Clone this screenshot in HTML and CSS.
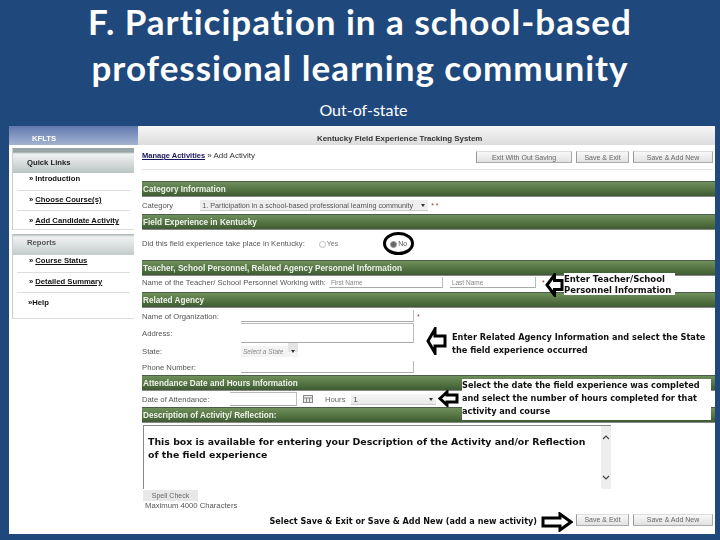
FILE: index.html
```html
<!DOCTYPE html>
<html lang="en">
<head>
    <meta charset="UTF-8">
    <title>F. Participation in a school-based professional learning community</title>
    <link rel="stylesheet" href="styles.css">
</head>
<body>
    <div class="slide">
        <h1><span class="line-one">F. Participation in a school-based</span><span class="line-two">professional learning community</span></h1>
        <div class="subtitle">Out-of-state</div>

        <div class="shot">
            <div class="shot-top">
                <div class="brand">KFLTS</div>
                <div class="system-name">Kentucky Field Experience Tracking System</div>
            </div>
            <div class="shot-body">
                <div class="sidebar">
                    <div class="side-box">
                        <div class="side-head">Quick Links</div>
                        <div class="side-link first">»<u class="plain">Introduction</u></div>
                        <div class="side-link">»<u>Choose Course(s)</u></div>
                        <div class="side-link end">»<u>Add Candidate Activity</u></div>
                    </div>
                    <div class="side-box">
                        <div class="side-head grey">Reports</div>
                        <div class="side-link first">»<u>Course Status</u></div>
                        <div class="side-link">»<u>Detailed Summary</u></div>
                        <div class="side-link last">»Help</div>
                    </div>
                </div>

                <div class="main">
                    <div class="toolbar">
                        <div class="crumbs"><u>Manage Activities</u> » Add Activity</div>
                        <div class="buttons">
                            <button class="btn wide">Exit With Out Saving</button>
                            <button class="btn">Save &amp; Exit</button>
                            <button class="btn mid">Save &amp; Add New</button>
                        </div>
                    </div>

                    <div class="bar">Category Information</div>
                    <div class="row row-cat">
                        <span class="label">Category</span>
                        <span class="select cat-select">1. Participation in a school-based professional learning community<i class="caret"></i></span>
                        <span class="req">* *</span>
                    </div>
                    <div class="bar">Field Experience in Kentucky</div>
                    <div class="row row-ky">
                        <span class="label">Did this field experience take place in Kentucky:</span>
                        <span class="radio">Yes</span>
                        <span class="radio on">No</span>
                    </div>
                    <div class="bar">Teacher, School Personnel, Related Agency Personnel Information</div>
                    <div class="row row-name">
                        <span class="label">Name of the Teacher/ School Personnel Working with:</span>
                        <span class="input first-name">First Name</span>
                        <span class="input last-name">Last Name</span>
                        <span class="req">*</span>
                    </div>
                    <div class="bar">Related Agency</div>
                    <div class="row row-agency">
                        <span class="label">Name of Organization:</span>
                        <span class="input agency">&nbsp;</span>
                        <span class="req">*</span>
                    </div>
                    <div class="row row-address">
                        <span class="label">Address:</span>
                        <span class="input agency tall">&nbsp;</span>
                    </div>
                    <div class="row row-state">
                        <span class="label">State:</span>
                        <span class="select state-select">Select a State<i class="caret boxed"></i></span>
                    </div>
                    <div class="row row-phone">
                        <span class="label">Phone Number:</span>
                        <span class="input agency">&nbsp;</span>
                    </div>
                    <div class="bar">Attendance Date and Hours Information</div>
                    <div class="row row-date">
                        <span class="label">Date of Attendance:</span>
                        <span class="input date">&nbsp;</span>
                        <svg class="cal" width="10" height="8" viewBox="0 0 10 8"><rect x="0.5" y="0.5" width="9" height="7" fill="#eee" stroke="#888"/><path d="M0 3h10M3.500 3v5M6.500 3v5" stroke="#888"/></svg>
                        <span class="label hours">Hours</span>
                        <span class="select hours-select">1<i class="caret"></i></span>
                        <span class="req">*</span>
                    </div>
                    <div class="bar">Description of Activity/ Reflection:</div>
                    <div class="desc">
                        <div class="desc-text">This box is available for entering your Description of the Activity and/or Reflection<br>of the field experience</div>
                        <div class="scroll">
                            <svg width="8" height="5" viewBox="0 0 8 5"><path d="M1 4 4 1l3 3" fill="none" stroke="#444" stroke-width="1.200"/></svg>
                            <svg width="8" height="5" viewBox="0 0 8 5"><path d="M1 1l3 3 3-3" fill="none" stroke="#444" stroke-width="1.200"/></svg>
                        </div>
                    </div>
                    <button class="btn spell">Spell Check</button>
                    <div class="max-chars">Maximum 4000 Characters</div>
                    <div class="bottom">
                        <div class="select-note">Select Save &amp; Exit or Save &amp; Add New (add a new activity)</div>
                        <div class="buttons">
                            <button class="btn">Save &amp; Exit</button>
                            <button class="btn mid">Save &amp; Add New</button>
                        </div>
                    </div>
                </div>
            </div>

            <!-- annotations drawn over the screenshot -->
            <div class="ring"></div>
            <svg class="arrow a1" width="19" height="24" viewBox="0 0 19 24"><path d="M2 12 9.500 2v5.500h7.500v9H9.500V22z" fill="#fff" stroke="#000" stroke-width="3"/></svg>
            <svg class="arrow a2" width="21" height="28" viewBox="0 0 21 28"><path d="M2 14 9 2v7h10v10H9v7z" fill="#fff" stroke="#000" stroke-width="3"/></svg>
            <svg class="arrow a3" width="21" height="17" viewBox="0 0 21 17"><path d="M2 8.500 9 2v3h10v7H9v3z" fill="#fff" stroke="#000" stroke-width="3"/></svg>
            <svg class="arrow a4" width="32" height="20" viewBox="0 0 32 20"><path d="M30 10 19 2v4H2v8h17v4z" fill="#fff" stroke="#000" stroke-width="3"/></svg>
            <div class="note n1">Enter Teacher/School<br>Personnel Information</div>
            <div class="note n2">Enter Related Agency Information and select the State<br>the field experience occurred</div>
            <div class="note n3">Select the date the field experience was completed<br>and select the number of hours completed for that<br>activity and course</div>
        </div>
    </div>
</body>
</html>
```

FILE: styles.css
```css
body {
    margin: 0;
    font-family: "Liberation Sans", sans-serif;
    background-color: #1f497d;
}

.slide {
    width: 720px;
    height: 540px;
    overflow: hidden;
    display: flex;
    flex-direction: column;
    align-items: center;
    background-color: #1f497d;
    color: white;
}

h1 {
    margin: 0;
    font-family: Lato, sans-serif;
    font-size: 35px;
    font-weight: 700;
    letter-spacing: 1px;
    text-align: center;
    white-space: nowrap;
}

.line-one {
    display: block;
    line-height: 42px;
}

.line-two {
    display: block;
    line-height: 51px;
}

.subtitle {
    margin: 6px 0 0 7px;
    height: 27px;
    font-family: Lato, sans-serif;
    font-size: 16px;
    line-height: 22px;
    text-align: center;
}

.shot {
    position: relative;
    width: 706px;
    height: 408px;
    margin-left: 4px;
    background-color: white;
    color: #333;
    font-size: 7.700px;
    filter: blur(0.35px);
}

.shot-top {
    display: flex;
    height: 19px;
    background: linear-gradient(#f6f6f6, #dcdcdc);
}

.brand {
    width: 129px;
    padding-left: 23px;
    box-sizing: border-box;
    background: linear-gradient(#5f78ad, #a4b3d2);
    color: white;
    font-weight: bold;
    line-height: 26px;
}

.system-name {
    flex: 1;
    padding-left: 179px;
    font-size: 7.900px;
    font-weight: bold;
    line-height: 26px;
}

.shot-body {
    display: flex;
}

.sidebar {
    width: 132px;
    padding: 3px 0 0 3px;
    box-sizing: border-box;
}

.side-box {
    width: 122px;
    margin-bottom: 4px;
    border-left: 1px solid #ccc;
    border-bottom: 1px solid #ddd;
    box-sizing: border-box;
}

.side-head {
    height: 25px;
    padding: 5px 0 0 14px;
    box-sizing: border-box;
    background: linear-gradient(#98a5a7, #98a5a7 16%, #f0f2f2 24%, #bcc4c4);
    color: #222;
    font-weight: bold;
    line-height: 20px;
}

.side-head.grey {
    height: 21px;
    padding-top: 0;
    background: linear-gradient(#a8b2b3, #f0f2f2 15%, #c3cbcb);
    color: #555;
    line-height: 18px;
}

.side-link {
    height: 20px;
    margin: 0 4px;
    padding-left: 12px;
    border-bottom: 1px solid #ddd;
    box-sizing: border-box;
    color: #111;
    font-weight: bold;
    line-height: 18px;
}

.side-link u {
    margin-left: 2px;
}

.side-link u.plain {
    text-decoration: none;
}

.side-link.first {
    height: 18px;
    line-height: 12px;
}

.side-link.end {
    height: 18px;
    border-bottom: none;
    line-height: 19px;
}

.side-link.last {
    height: 25px;
    padding-left: 11px;
    border-bottom: none;
    line-height: 19px;
}

.main {
    width: 574px;
    padding-left: 1px;
    box-sizing: border-box;
}

.toolbar {
    display: flex;
    justify-content: space-between;
    height: 24px;
    margin-right: 2px;
    margin-bottom: 11px;
    border-bottom: 1px solid #e4e4e4;
}

.crumbs {
    padding-top: 6px;
    font-size: 8px;
}

.crumbs u {
    color: #14145a;
    font-size: 7.500px;
    font-weight: bold;
}

.buttons {
    display: flex;
    gap: 4px;
    padding-top: 6px;
}

.btn {
    width: 53px;
    height: 12px;
    padding: 0;
    border: 1px solid #aaa;
    border-top-color: #ddd;
    border-left-color: #999;
    background: linear-gradient(#f8f8f8, #e2e2e2);
    color: #666;
    font-family: "Liberation Sans", sans-serif;
    font-size: 7px;
}

.btn.wide {
    width: 96px;
}

.btn.mid {
    width: 80px;
}

.bar {
    height: 16px;
    padding-left: 1px;
    background: linear-gradient(#6f8f5c, #4c6c3c 70%, #3e5a34);
    border-top: 1px solid #4e5d4a;
    border-bottom: 1px solid #888;
    box-sizing: border-box;
    color: #eef2ea;
    font-size: 8.200px;
    font-weight: bold;
    line-height: 16px;
    white-space: nowrap;
}

.row {
    display: flex;
    align-items: center;
    height: 16px;
    box-sizing: border-box;
    color: #555;
}

.label {
    flex: none;
}

.req {
    margin-left: 3px;
    color: #a33;
    font-size: 7px;
}

.select, .input {
    display: inline-block;
    flex: none;
    height: 11px;
    box-sizing: border-box;
    color: #888;
    font-size: 6.500px;
    line-height: 11px;
    white-space: nowrap;
}

.select {
    position: relative;
    background-color: #eee;
    border-bottom: 1px solid #ccc;
}

.caret {
    position: absolute;
    right: 3px;
    top: 4px;
    border-left: 2.500px solid transparent;
    border-right: 2.500px solid transparent;
    border-top: 3px solid #333;
}

.input {
    padding-left: 2px;
    border-bottom: 1px solid #aaa;
    border-right: 1px solid #bbb;
}

.row-cat {
    height: 17px;
}

.cat-select {
    width: 228px;
    margin-left: 27px;
    padding-left: 2px;
    color: #555;
    font-size: 7.200px;
}

.row-ky {
    height: 30px;
    padding-bottom: 3px;
}

.radio {
    position: relative;
    margin-left: 13px;
    padding-left: 9px;
    color: #777;
    font-size: 7px;
}

.radio::before {
    content: "";
    position: absolute;
    left: 1px;
    top: 1px;
    width: 5px;
    height: 5px;
    border: 1px solid #bbb;
    border-radius: 50%;
}

.radio.on {
    margin-left: 51px;
    color: #555;
}

.radio.on::before {
    background-color: #666;
    border-color: #999;
}

.row-name {
    padding-bottom: 3px;
}

.first-name {
    width: 114px;
    margin-left: 3px;
}

.last-name {
    width: 86px;
    margin-left: 7px;
}

.row-name .req {
    margin-left: 6px;
}

.row-agency {
    height: 15px;
    padding-top: 1px;
}

.agency {
    width: 173px;
    height: 12px;
}

.agency.tall {
    height: 20px;
    border-top: 1px solid #bbb;
}

.row-agency .label, .row-address .label, .row-state .label, .row-phone .label {
    width: 99px;
}

.row-address {
    height: 20px;
}

.state-select {
    width: 57px;
    padding-left: 2px;
    font-style: italic;
    background-color: #f4f4f4;
    border-bottom: none;
}

.caret.boxed {
    box-shadow: 0 -4px 0 3px #e4e4e4;
}

.row-date .label:first-child {
    width: 88px;
}

.date {
    width: 67px;
    height: 14px;
    border-top: 1px solid #bbb;
}

.cal {
    margin-left: 6px;
}

.hours {
    margin-left: 12px;
    color: #666;
}

.hours-select {
    width: 85px;
    margin-left: 5px;
    padding-left: 3px;
    background: linear-gradient(#f6f6f6, #e8e8e8);
    color: #444;
    font-size: 7.500px;
}

.desc {
    display: flex;
    width: 468px;
    height: 64px;
    margin: 2px 0 1px 1px;
    border-left: 1px solid #888;
    border-top: 1px solid #888;
    box-sizing: border-box;
}

.desc-text {
    flex: 1;
    padding: 9px 0 0 4px;
    color: #111;
    font-family: "DejaVu Sans", sans-serif;
    font-size: 9.400px;
    font-weight: bold;
    line-height: 13px;
    white-space: nowrap;
}

.scroll {
    display: flex;
    flex-direction: column;
    justify-content: space-between;
    align-items: center;
    width: 10px;
    padding: 9px 0 9px;
    box-sizing: border-box;
    background-color: #eee;
}

.spell {
    display: block;
    width: 55px;
    height: 11px;
    margin-left: 1px;
    border: none;
    background: #e8e8e8;
}

.max-chars {
    margin-left: 3px;
    height: 12px;
    color: #555;
    line-height: 9px;
}

.bottom {
    display: flex;
    justify-content: flex-end;
    align-items: center;
    margin-right: 2px;
}

.bottom .buttons {
    padding-top: 0;
}

.select-note {
    margin-right: 39px;
    padding-top: 3px;
    color: #111;
    font-family: "DejaVu Sans", sans-serif;
    font-size: 8.100px;
    font-weight: bold;
    white-space: nowrap;
}

/* annotations */
.ring {
    position: absolute;
    left: 374px;
    top: 106px;
    width: 25px;
    height: 17px;
    border: 3px solid #000;
    border-radius: 50%;
}

.arrow {
    position: absolute;
}

.a1 { left: 536px; top: 147px; }
.a2 { left: 417px; top: 201px; }
.a3 { left: 429px; top: 264px; }
.a4 { left: 532px; top: 386px; }

.note {
    position: absolute;
    box-sizing: border-box;
    background-color: white;
    color: #111;
    font-family: "DejaVu Sans", sans-serif;
    font-size: 8.200px;
    font-weight: bold;
    line-height: 13px;
    white-space: nowrap;
}

.n1 {
    left: 555px;
    top: 147px;
    width: 111px;
    height: 22px;
    padding-top: 1px;
    font-size: 8.500px;
    line-height: 11px;
}

.n2 {
    left: 443px;
    top: 205px;
    background-color: transparent;
}

.n3 {
    left: 453px;
    top: 253px;
    width: 249px;
    height: 41px;
}
```
